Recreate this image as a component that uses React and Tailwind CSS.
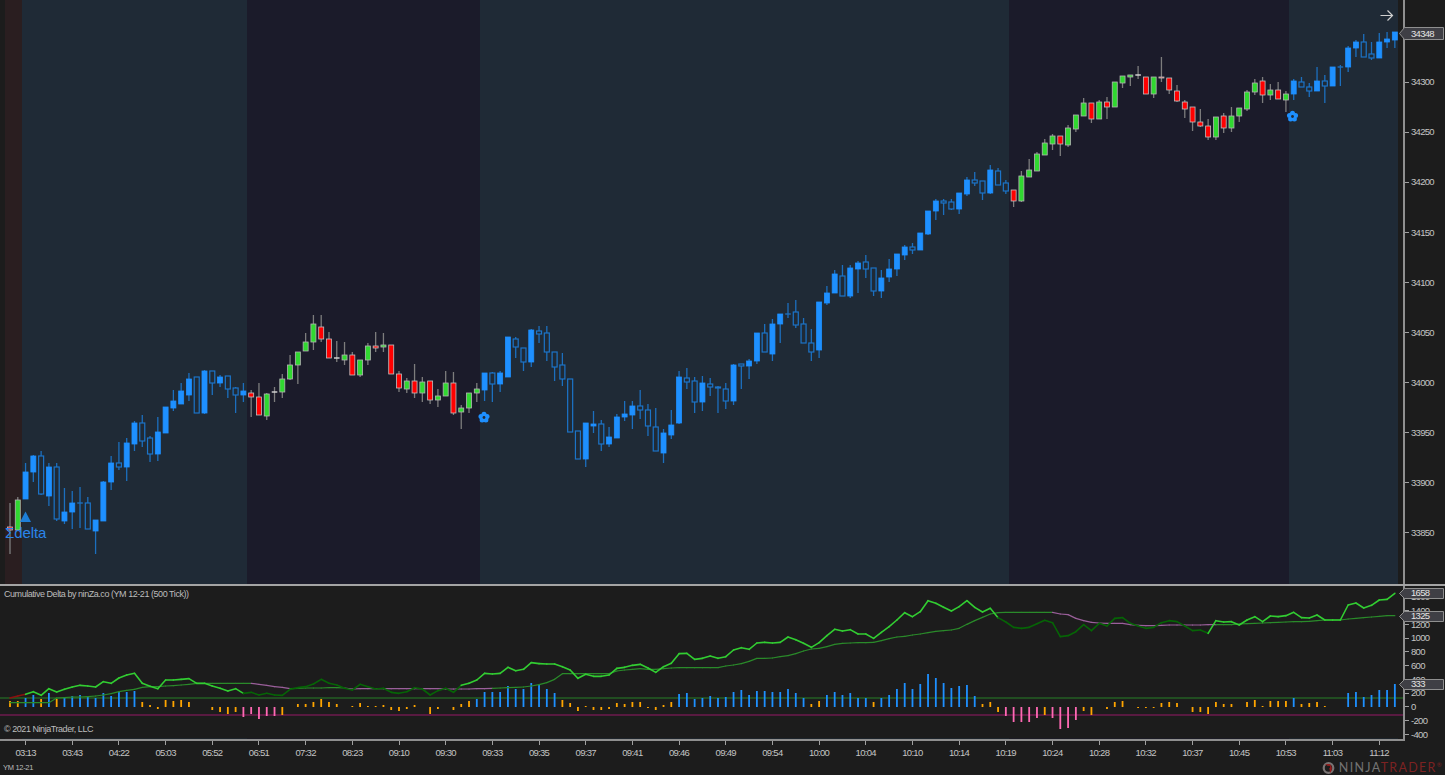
const C = [
[503,527,530,554,'r'],[497,500,530,530,'g'],[463,472,499,499,'f'],[455,456,472,482,'f'],[451,456,494,495,'h'],[463,467,496,506,'f'],[463,467,519,521,'h'],[488,512,521,524,'f'],[491,503,512,529,'f'],[487,503,503,528,'f'],[497,503,529,529,'h'],[520,520,531,554,'f'],[481,482,521,521,'f'],[456,463,482,490,'f'],[442,463,467,470,'h'],[438,443,467,481,'f'],
[421,423,444,451,'f'],[415,423,441,447,'h'],[436,438,454,462,'h'],[417,432,454,461,'f'],[407,407,433,433,'f'],[390,401,408,411,'f'],[383,391,404,404,'f'],[373,379,395,401,'f'],[377,377,413,413,'h'],[370,371,413,414,'f'],[371,371,383,395,'h'],[375,377,383,387,'f'],[376,376,389,398,'h'],[387,388,395,413,'h'],[383,391,395,402,'f'],
[390,393,397,417,'r'],[383,397,415,415,'r'],[393,394,416,420,'g'],[387,392,392,402,'d'],[374,379,392,398,'g'],[355,365,379,380,'g'],[352,352,365,384,'g'],[333,342,351,351,'g'],[315,324,342,350,'g'],[315,327,339,342,'r'],[332,339,358,358,'r'],[341,358,358,362,'d'],[342,355,360,365,'g'],[352,355,375,375,'r'],[360,360,375,377,'g'],[343,346,360,365,'g'],[332,346,348,352,'r'],[333,345,347,352,'g'],[345,345,374,374,'r'],[371,374,388,392,'r'],[378,381,389,393,'g'],[364,381,393,398,'r'],[377,382,393,402,'g'],[381,381,400,404,'r'],[389,396,400,407,'g'],[371,383,396,396,'g'],[372,383,413,415,'r'],[405,408,412,429,'g'],[393,393,408,413,'g'],[383,389,393,402,'g'],
[373,373,390,401,'f'],[372,373,384,402,'h'],[371,373,384,392,'f'],[337,337,377,377,'f'],[337,339,347,358,'h'],[348,348,362,371,'h'],[329,330,362,367,'f'],[326,331,334,343,'h'],[326,333,352,361,'h'],[352,352,367,381,'h'],[353,365,379,386,'h'],[379,379,432,432,'h'],[431,431,459,459,'h'],[423,423,459,467,'f'],[411,424,426,433,'f'],[420,424,444,451,'h'],[427,437,444,447,'f'],[414,417,438,438,'f'],[401,414,417,421,'f'],[401,406,415,429,'f'],[390,406,410,419,'h'],[404,410,426,436,'h'],[408,427,451,451,'h'],[429,433,453,463,'f'],[410,425,435,439,'f'],[371,377,423,424,'f'],[368,378,382,389,'h'],[377,381,402,413,'h'],[376,383,402,411,'f'],[378,384,387,396,'h'],[386,387,388,413,'h'],[383,389,401,409,'h'],[364,365,401,405,'f'],
[364,364,366,389,'h'],[359,361,366,379,'f'],[333,333,361,364,'f'],[324,333,352,352,'h'],[319,324,354,361,'f'],[314,314,324,343,'f'],[303,314,314,318,'e'],[300,312,325,328,'h'],[318,324,343,343,'h'],[329,343,352,361,'h'],[302,302,350,358,'f'],[286,293,303,305,'f'],[270,274,293,293,'f'],[265,276,296,296,'h'],[265,268,296,298,'f'],[261,263,269,293,'f'],[255,262,269,278,'h'],[268,268,291,296,'h'],[270,278,291,298,'f'],[259,269,277,282,'f'],[254,254,269,276,'f'],[245,247,255,260,'f'],[243,247,250,254,'h'],[233,233,250,250,'f'],[211,211,234,235,'f'],[199,201,211,220,'f'],[199,201,203,215,'h'],[199,202,209,210,'h'],[193,193,209,214,'f'],[177,180,194,196,'f'],[172,180,183,186,'h'],[181,181,193,200,'h'],[165,170,193,194,'f'],[168,171,185,185,'h'],[180,183,191,194,'h'],
[190,190,201,207,'r'],[171,176,201,202,'g'],[159,170,177,177,'g'],[152,154,171,171,'g'],[139,143,155,155,'g'],[134,136,144,150,'g'],[136,136,144,156,'r'],[125,128,145,147,'g'],[115,115,129,132,'g'],[98,103,116,116,'g'],[103,103,119,123,'r'],[100,102,119,119,'g'],[97,102,107,119,'r'],[82,82,107,107,'g'],[76,76,83,88,'g'],[75,75,77,86,'g'],[66,75,75,79,'d'],[77,77,94,94,'r'],[77,77,94,98,'g'],[57,77,78,82,'r'],[78,78,90,94,'r'],[85,91,101,102,'r'],[100,102,109,118,'r'],[107,107,122,131,'r'],[109,122,126,127,'r'],[119,126,137,140,'r'],[117,117,137,140,'g'],[113,116,128,133,'r'],[107,116,128,132,'g'],[108,108,116,122,'g'],[90,92,109,111,'g'],[79,83,92,95,'g'],[77,81,95,103,'r'],[84,90,95,100,'g'],[82,90,99,99,'r'],[91,94,100,112,'g'],
[79,81,94,100,'f'],[77,82,87,87,'h'],[83,87,91,97,'h'],[67,81,91,91,'f'],[75,81,86,103,'h'],[67,67,86,86,'f'],[65,67,67,86,'e'],[46,48,67,72,'f'],[40,42,48,57,'f'],[34,42,57,57,'h'],[42,54,58,60,'h'],[33,42,58,58,'f'],[32,39,42,48,'f'],[32,32,40,48,'f'],
];

const H = [6,6,9,12,8,14,8,10,11,12,11,9,14,11,15,15,16,5,2,-2,7,6,7,5,0,0,-3,-5,-7,-5,-10,-7,-12,-9,-9,-8,0,3,3,5,8,5,3,0,1,4,1,1,2,-3,-4,-2,2,0,-7,-2,0,-3,3,6,8,15,15,15,21,18,18,24,22,18,14,7,4,-4,1,-3,-3,-2,4,3,5,5,-1,-3,2,5,13,14,8,9,11,9,10,15,17,12,16,16,15,15,18,14,9,3,6,12,15,12,14,9,9,5,9,12,18,24,18,23,33,29,24,19,21,22,11,3,5,-5,-9,-15,-15,-15,-11,-8,-11,-22,-21,-13,-4,-8,0,-2,5,6,0,-1,-1,-1,4,5,4,0,-5,-5,-7,5,3,3,0,5,7,1,6,6,6,9,3,4,5,1,0,0,14,15,10,12,17,17,23];
const ORANGE = new Set([0,1,4,6,17,18,19,20,21,22,23,26,27,28,29,35,37,38,39,40,41,42,44,45,46,47,48,49,50,51,52,54,55,57,58,59,71,72,73,74,75,76,77,78,79,80,81,82,83,84,85,103,104,111,125,126,127,133,138,139,141,142,143,145,146,147,148,149,150,152,153,154,155,156,157,159,160,161,162,163,164,166,167,168,169]);

const fast = [
  ...[354,348,343,335,346,326,336,328,321,316,318,321,305,310,294,285,280,310,319,326,300,300,298,296,310,310,318,325,333,326,340,337,345,340,345,346,328,323,320,312,298,310,315,325,330].map(v=>580+v/3),
  ...[133,140,147,145,157,160,155,143,147,165,152,145,157,136,130,120,100,102,100,82,92,88,68,71,72,72,80,90,115,103,109,109,105,85,82,76,73,84,97,80,70,41,40,58,55,48,55].map(v=>640+v/3),
  ...[200,180,173,178,159,157,159,157,141,149,160,172,158,137,118,123,119,132,132,145,127,110,90,68,80,65,32,40,52,63,50,32,52,66,55,83,96,112,115,112,101,91,98,140,137,125,104,122,100,108,85,83,100,108,115,112,98,92,95,108,122,120].map(v=>590+v/3),
  ...[160,122,126,125,135,120,110,125,108,110,107,97,113,114,105,120,120,120,75,69,84,76,60,58,40].map(v=>580+v/3),
];
const slow = [
  ...[368,368,368,368,368,368,354,353,351,351,350,348,345,341,335,331,328,322,320,320,318,317,315,313,310,310,310,310,310,310,310,310,313,316,320,322,326,325,324,324,324,323,323,324,327].map(v=>580+v/3),
  ...[146,146,146,146,146,146,146,146,146,146,146,147,147,147,147,146,146,145,144,143,142,141,138,134,128,118,101,101,101,101,101,101,101,93,90,88,86,88,88,86,84,83,83,83,83,83,83].map(v=>640+v/3),
  ...[228,225,221,214,205,205,204,200,197,191,183,177,175,170,163,160,159,158,158,157,152,146,141,139,135,132,128,124,122,120,115,103,92,82,72,68,67,67,67,67,67,67,67,72,74,85,92,97,99,100,100,100,104,106,107,107,106,105,105,105,105,105].map(v=>590+v/3),
  ...[134,134,134,134,132,131,130,129,128,127,126,125,125,124,122,120,120,120,117,115,113,111,109,107,107].map(v=>580+v/3),
];
const bx = (i) => 10 + 7.78 * i;

const fastColor = (i) => (i < 2 ? '#8b1010' : (i >= 30 && i < 58) || (i >= 127 && i < 154) ? '#066406' : '#32cd32');
const slowColor = (i) => ((i >= 31 && i < 36) || (i >= 43 && i < 62) || (i >= 134 && i < 155) ? '#9a5f9a' : '#2a8a2a');

function Candle({ c, i }) {
  const [wt, bt, bb, wb, t] = c;
  const x = bx(i);
  const dark = t === 'r' || t === 'g' || t === 'd';
  const wick = dark ? '#7d7d7d' : '#1c6fbe';
  if (bt === bb) {
    return (
      <g>
        <line x1={x} x2={x} y1={wt} y2={wb} stroke={wick} strokeWidth="1.3" />
        <line x1={x - 2.8} x2={x + 2.8} y1={bt} y2={bt} stroke={dark ? '#d8d8d8' : '#1c6fbe'} strokeWidth="1.4" />
      </g>
    );
  }
  let fill = '#1e90ff', stroke = '#1e90ff', sw = 0.8;
  if (t === 'h') { fill = '#1f2a36'; stroke = '#1c74c8'; sw = 1.2; }
  if (t === 'g') { fill = '#30d830'; stroke = '#b5b5b5'; }
  if (t === 'r') { fill = '#ff0000'; stroke = '#c0c0c0'; }
  return (
    <g>
      <line x1={x} x2={x} y1={wt} y2={wb} stroke={wick} strokeWidth="1.3" />
      <rect x={x - 2.5} y={bt} width="5" height={Math.max(bb - bt, 1)} fill={fill} stroke={stroke} strokeWidth={sw} />
    </g>
  );
}

function Flower({ x, y }) {
  const petals = [0, 72, 144, 216, 288].map((a) => {
    const r = ((a - 90) * Math.PI) / 180;
    return [x + 3.2 * Math.cos(r), y + 3.2 * Math.sin(r)];
  });
  return (
    <g>
      {petals.map(([px, py], k) => <circle key={k} cx={px} cy={py} r="2.5" fill="#1e90ff" />)}
      <circle cx={x} cy={y} r="2.6" fill="#1e90ff" />
      <circle cx={x} cy={y} r="1.4" fill="#1f2a36" />
    </g>
  );
}

function Bands({ className }) {
  return (
    <div className={`flex w-full ${className}`}>
      <div className="w-[5px] bg-[#1c1c1c]" />
      <div className="w-[17px] bg-[#2a1e20]" />
      <div className="w-[225px] bg-[#1f2a36]" />
      <div className="w-[233px] bg-[#1b1b2a]" />
      <div className="w-[529px] bg-[#1f2a36]" />
      <div className="w-[280px] bg-[#1b1b2a]" />
      <div className="w-[109px] bg-[#1f2a36]" />
      <div className="flex-1 bg-[#1c1c1c]" />
    </div>
  );
}

function Tick({ children }) {
  return (
    <div className="flex items-center h-full">
      <div className="w-[4px] h-px bg-[#a0a0a0]" />
      <span className="ml-[2px] text-[9.5px] leading-none tracking-[-0.7px] text-[#c4c4c4]">{children}</span>
    </div>
  );
}

function Badge({ className, h, children }) {
  return (
    <div className={`absolute left-[-6px] w-[45px] ${className}`}>
      <svg className="absolute inset-0" width="45" height={h}>
        <polygon points={`0.5,${h / 2} 5.5,0.5 44.5,0.5 44.5,${h - 0.5} 5.5,${h - 0.5}`} fill="#3f3f45" stroke="#8f8f8f" strokeWidth="1" />
      </svg>
      <span className="absolute left-[12px] top-0 h-full flex items-center text-[9.5px] leading-none tracking-[-0.7px] text-[#e4e4e4]">{children}</span>
    </div>
  );
}

const TIMES = ['03:13','03:43','04:22','05:03','05:52','06:51','07:32','08:23','09:10','09:30','09:33','09:35','09:37','09:41','09:46','09:49','09:54','10:00','10:04','10:10','10:14','10:19','10:24','10:28','10:32','10:37','10:45','10:53','11:03','11:12'];
const PRICES = ['34300','34250','34200','34150','34100','34050','34000','33950','33900','33850'];
const DELTAS = ['1600','1400','1200','1000','800','600','400','200','0','-200','-400'];

export default function App() {
  return (
    <div className="w-[1445px] h-[775px] overflow-hidden bg-[#1c1c1c] flex flex-col font-['Liberation_Sans',Arial,sans-serif] text-[#c4c4c4]">
      {/* Price panel */}
      <div className="flex h-[584px]">
        <div className="relative w-[1403px] h-full">
          <Bands className="h-full" />
          <svg className="absolute inset-0" width="1403" height="584">
            {C.map((c, i) => <Candle key={i} c={c} i={i} />)}
            <polygon points="25.5,511.5 31,522 20,522" fill="#1e7fd8" />
            <path d="M1380.5 15.5H1392.5M1387.5 10.5L1392.5 15.5L1387.5 20.5" fill="none" stroke="#d0d0d0" strokeWidth="1.2" />
            <Flower x={484} y={417.5} />
            <Flower x={1292.5} y={116.5} />
          </svg>
          <span className="absolute left-[5px] top-[524px] text-[15px] leading-[18px] tracking-[-0.1px] text-[#2b85ea]">Σdelta</span>
        </div>
        <div className="relative flex-1 border-l-2 border-[#8f8f8f] pt-[57px]">
          {PRICES.map((p) => (
            <div key={p} className="h-[50.1px]"><Tick>{p}</Tick></div>
          ))}
          <Badge className="top-[27px] h-[13px]" h={13}>34348</Badge>
        </div>
      </div>

      {/* Indicator panel */}
      <div className="flex h-[155px] border-t-2 border-[#a4a4a4]">
        <div className="relative w-[1403px] flex flex-col">
          <svg className="absolute inset-0" width="1403" height="153">
            <g transform="translate(0,-586)">
              <line x1="0" x2="1403" y1="698" y2="698" stroke="#235e23" strokeWidth="1.3" />
              <line x1="0" x2="1403" y1="715" y2="715" stroke="#6e1a4e" strokeWidth="1.3" />
              {H.map((h, i) => h === 0 ? null : (
                <rect key={i} x={bx(i) - 0.9} y={h > 0 ? 707 - h : 707} width="1.8" height={Math.abs(h)}
                  fill={ORANGE.has(i) ? '#ffa500' : h < 0 ? '#ff69b4' : '#1e90ff'} />
              ))}
              {slow.slice(1).map((y, k) => (
                <line key={k} x1={bx(k)} x2={bx(k + 1)} y1={slow[k]} y2={y} stroke={slowColor(k)} strokeWidth="1.2" strokeLinecap="round" />
              ))}
              {fast.slice(1).map((y, k) => (
                <line key={k} x1={bx(k)} x2={bx(k + 1)} y1={fast[k]} y2={y} stroke={fastColor(k)} strokeWidth="1.6" strokeLinecap="round" />
              ))}
            </g>
          </svg>
          <div className="relative pl-[4px] pt-[2px] text-[9px] leading-[12px] tracking-[-0.45px] text-[#bcbcbc]">Cumulative Delta by ninZa.co (YM 12-21 (500 Tick))</div>
          <div className="relative mt-auto mb-[3px] pl-[4px] text-[9px] leading-[12px] tracking-[-0.45px] text-[#bcbcbc]">© 2021 NinjaTrader, LLC</div>
          <Bands className="relative h-px opacity-60" />
        </div>
        <div className="relative flex-1 border-l-2 border-[#8f8f8f] pt-[4px]">
          {DELTAS.map((d) => (
            <div key={d} className="h-[13.75px]"><Tick>{d}</Tick></div>
          ))}
          <Badge className="top-[1.5px] h-[11px]" h={11}>1658</Badge>
          <Badge className="top-[24.5px] h-[11px]" h={11}>1325</Badge>
          <Badge className="top-[92.5px] h-[11px]" h={11}>333</Badge>
        </div>
      </div>

      {/* Time axis */}
      <div className="flex flex-col flex-1">
        <div className="flex w-[1405px] h-[22px] pl-[2.3px] border-t-2 border-[#8f8f8f]">
          {TIMES.map((t) => (
            <div key={t} className="w-[46.68px] flex flex-col items-center">
              <div className="w-px h-[4px] bg-[#a0a0a0]" />
              <span className="mt-[3px] text-[9.5px] leading-[10px] tracking-[-0.7px] text-[#c4c4c4]">{t}</span>
            </div>
          ))}
        </div>
        <div className="flex-1 flex items-center justify-between pl-[3px] pr-[2px]">
          <span className="text-[7.5px] leading-none tracking-[-0.3px] text-[#bcbcbc]">YM 12-21</span>
          <div className="flex items-center gap-[1px]">
            <svg width="17" height="12" viewBox="0 0 17 12">
              <circle cx="7.5" cy="6" r="4.8" fill="none" stroke="#7a7474" strokeWidth="2.2" />
              <path d="M3.5 2.5C6.5 3 9 5 9 11C11.5 8.5 11.5 4 8.5 2Z" fill="#9a1c1c" />
              <circle cx="8" cy="5" r="1.2" fill="#1c1c1c" />
            </svg>
            <span className="text-[12.5px] leading-none tracking-[1.3px] whitespace-nowrap font-['Lato',sans-serif]">
              <span className="text-[#737373]">NINJA</span><span className="text-[#7c2222]">TRADER</span><span className="text-[6px] align-top text-[#7c2222]">®</span>
            </span>
          </div>
        </div>
      </div>
    </div>
  );
}
